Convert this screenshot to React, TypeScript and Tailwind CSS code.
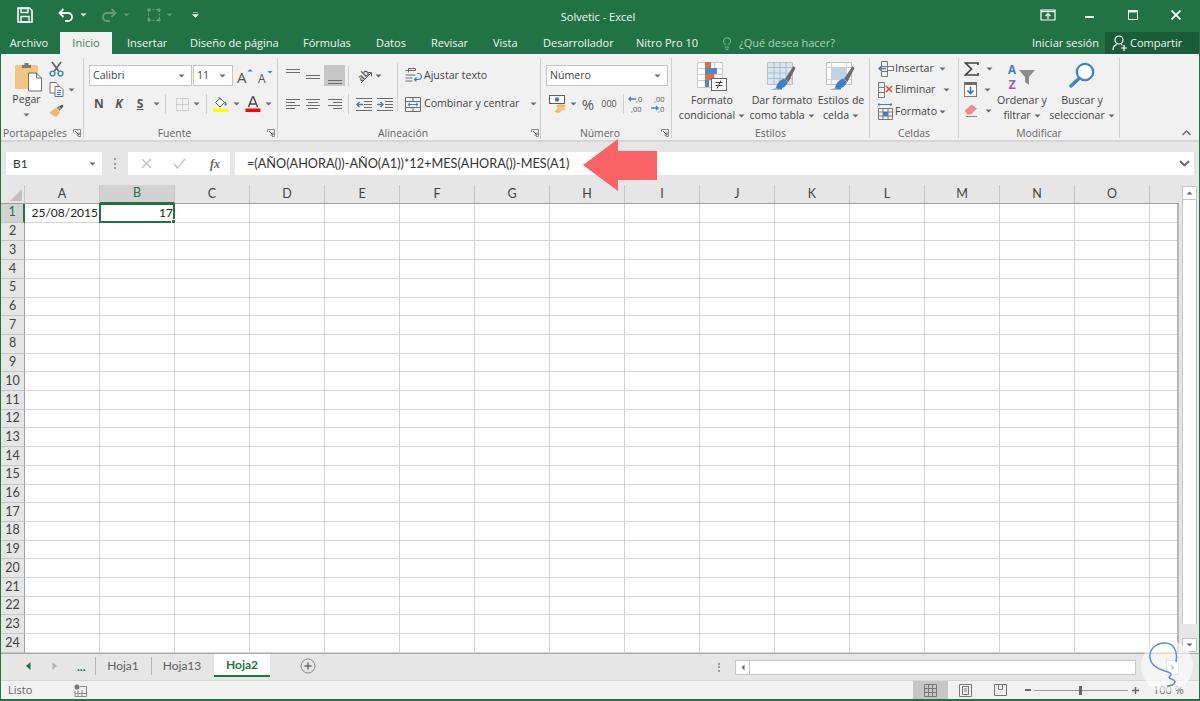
import { Lightbulb } from "lucide-react";

const columns = ["A", "B", "C", "D", "E", "F", "G", "H", "I", "J", "K", "L", "M", "N", "O"];
const rows = Array.from({ length: 24 }, (_, i) => i + 1);

const Caret = () => (
  <svg width="7" height="4" viewBox="0 0 7 4" className="shrink-0">
    <path d="M0.5 0.5h6L3.5 3.5z" fill="#6a6a6a" />
  </svg>
);

const WhiteCaret = () => (
  <svg width="7" height="4" viewBox="0 0 7 4" className="shrink-0">
    <path d="M0.5 0.5h6L3.5 3.5z" fill="#ffffff" />
  </svg>
);

const Launcher = () => (
  <svg width="8" height="8" viewBox="0 0 8 8" className="shrink-0">
    <path d="M0.5 3V0.5H7.5V7.5H5" fill="none" stroke="#8a8a8a" />
    <path d="M2 2l4 4M6 3.5V6H3.5" fill="none" stroke="#5e5e5e" />
  </svg>
);

const Sep = ({ className = "" }: { className?: string }) => <div className={`w-px h-[20px] bg-[#cfcfcf] shrink-0 ${className}`} />;

// lines of the alignment buttons
const Lines = ({ items, y = 0 }: { items: [number, number, number][]; y?: number }) => (
  <svg width="16" height="14" viewBox="0 0 16 14" style={{ transform: `translateY(${y}px)` }}>
    {items.map(([a, b, c], i) => (
      <path key={i} d={`M${a} ${c + 0.5}H${b}`} stroke="#6d6d6d" />
    ))}
  </svg>
);

const PasteIcon = () => (
  <svg width="27" height="30" viewBox="0 0 27 30">
    <rect x="0" y="3" width="23" height="24" rx="1.5" fill="#f0c781" />
    <path d="M7 3h2.5V1h4v2H16v3H7z" fill="#7a7a7a" />
    <path d="M13.5 11h8l5 5v13h-13z" fill="#ffffff" stroke="#6e6e6e" />
    <path d="M21.5 11v5h5" fill="none" stroke="#6e6e6e" />
  </svg>
);

const ScissorsIcon = () => (
  <svg width="15" height="16" viewBox="0 0 15 16">
    <path d="M3 1l6.5 9M12 1L5.5 10" stroke="#5a5a5a" strokeWidth="1.6" fill="none" />
    <circle cx="3.5" cy="12.5" r="2.4" fill="none" stroke="#3f7fc4" strokeWidth="1.4" />
    <circle cx="11.5" cy="12.5" r="2.4" fill="none" stroke="#3f7fc4" strokeWidth="1.4" />
  </svg>
);

const CopyIcon = () => (
  <svg width="15" height="15" viewBox="0 0 15 15">
    <path d="M1 0.5h6l2 2V11H1z" fill="#fff" stroke="#6e6e6e" />
    <path d="M6 4.5h5l3 3v7H6z" fill="#fff" stroke="#6e6e6e" />
    <path d="M8 8.5h4M8 10.5h4M8 12.5h4" stroke="#3f7fc4" />
  </svg>
);

const BrushIcon = () => (
  <svg width="16" height="14" viewBox="0 0 16 14">
    <path d="M0.5 8.5L7 3.5l4 5-3.5 4.5C5 12.5 2 10.5 0.5 8.5z" fill="#eeb96e" />
    <path d="M7.5 3.5l2-1.5 2.5 3-1.5 2z" fill="#8a8a8a" />
    <path d="M10 2.5l3-2 1.5 1.5-2 3z" fill="#555555" />
  </svg>
);

const GrowA = ({ up }: { up: boolean }) => (
  <svg width="20" height="20" viewBox="0 0 20 20">
    <text x="2" y="17" fontFamily="Open Sans, sans-serif" fontSize={up ? 15 : 12} fill="#555555">
      A
    </text>
    <path d={up ? "M12.5 5.5L15 3l2.5 2.5z" : "M11.5 5h5L14 7.5z"} fill="#3f7fc4" />
  </svg>
);

const BordersIcon = () => (
  <svg width="13" height="13" viewBox="0 0 13 13">
    <path d="M0.5 0.5h12v12h-12zM6.5 0.5v12M0.5 6.5h12" fill="none" stroke="#b0b0b0" strokeDasharray="1 1" />
  </svg>
);

const FillIcon = () => (
  <svg width="16" height="16" viewBox="0 0 16 16">
    <path d="M2.5 6.5L7 2l4.5 4.5L7 11z" fill="#fff" stroke="#5e5e5e" />
    <path d="M5.5 1l2 3" stroke="#5e5e5e" />
    <path d="M12 5c1.5 2 2 3 1.5 4s-2 .5-2-.5 .5-2 .5-3.5z" fill="#3f7fc4" />
    <rect x="0" y="12.5" width="15" height="3.5" fill="#ffff00" />
  </svg>
);

const FontColorIcon = () => (
  <svg width="16" height="16" viewBox="0 0 16 16">
    <path d="M3.5 11L7.5 1h1l4 10M5 8h6" fill="none" stroke="#444444" strokeWidth="1.4" />
    <rect x="0.5" y="12.5" width="15" height="3.5" fill="#ff0000" />
  </svg>
);

const OrientationIcon = () => (
  <svg width="20" height="18" viewBox="0 0 20 18">
    <text x="3" y="13" transform="rotate(-45 7 10)" fontFamily="Open Sans, sans-serif" fontSize="10" fontWeight="600" fill="#555555">
      ab
    </text>
    <path d="M6 16L16 6M12.5 5.5H16.5V9.5" fill="none" stroke="#5e5e5e" />
  </svg>
);

const IndentIcon = ({ out }: { out: boolean }) => (
  <svg width="16" height="13" viewBox="0 0 16 13">
    <path d="M0 0.5h16M8 3.5h8M8 6.5h8M8 9.5h8M0 12.5h16" stroke="#6d6d6d" />
    <path d={out ? "M7 6.5H1M3.5 4L1 6.5 3.5 9" : "M0 6.5h6M3.5 4L6 6.5 3.5 9"} fill="none" stroke="#3f7fc4" strokeWidth="1.4" />
  </svg>
);

const WrapIcon = () => (
  <svg width="17" height="15" viewBox="0 0 17 15">
    <path d="M0.5 2.5h10v-2h-7v4M0.5 7h10M0.5 10h7M0.5 13h7" fill="none" stroke="#6d6d6d" />
    <path d="M10 11.5h3.5a2.5 2.5 0 0 0 0-6H12M11.5 9.5l-2 2 2 2" fill="none" stroke="#3f7fc4" strokeWidth="1.2" />
  </svg>
);

const MergeIcon = () => (
  <svg width="16" height="15" viewBox="0 0 16 15">
    <path d="M0.5 0.5h15v14h-15zM0.5 4.5h15M0.5 10.5h15M8 0.5v4M8 10.5v4" fill="none" stroke="#6d6d6d" />
    <path d="M3 7.5h10M5 5.8L3 7.5l2 1.7M11 5.8l2 1.7-2 1.7" fill="none" stroke="#3f7fc4" />
  </svg>
);

const CurrencyIcon = () => (
  <svg width="18" height="18" viewBox="0 0 18 18">
    <rect x="0.5" y="0.5" width="15" height="8" fill="#fff" stroke="#5e5e5e" />
    <circle cx="8" cy="4.5" r="2.2" fill="#3f7fc4" />
    <ellipse cx="12" cy="11" rx="4.5" ry="1.8" fill="#eeb96e" />
    <ellipse cx="12" cy="14" rx="4.5" ry="1.8" fill="#f0c781" />
    <ellipse cx="9" cy="16.2" rx="3" ry="1.5" fill="#eeb96e" />
  </svg>
);

const DecimalIcon = ({ more }: { more: boolean }) => (
  <svg width="18" height="20" viewBox="0 0 18 20" className="overflow-visible">
    <text x={more ? 8 : 5} y="8" fontFamily="Open Sans, sans-serif" fontSize="7.5" fill="#555555">
      {more ? ",0" : ",00"}
    </text>
    <text x={more ? 3 : 9} y="18" fontFamily="Open Sans, sans-serif" fontSize="7.5" fill="#555555">
      {more ? ",00" : ",0"}
    </text>
    <path d={more ? "M8 5H1M3 3L1 5l2 2" : "M2 14h7M7 12l2 2-2 2"} fill="none" stroke="#3f7fc4" strokeWidth="1.3" />
  </svg>
);

const CondFormatIcon = () => (
  <svg width="30" height="29" viewBox="0 0 30 29">
    <path d="M0.5 0.5h25v25h-25z" fill="#fff" stroke="#c9c9c9" />
    <path d="M8.5 0v26M17.5 0v26M0 6.5h26M0 12.5h26M0 18.5h26" stroke="#d0d0d0" />
    <rect x="8" y="0" width="6" height="6" fill="#dd6b45" />
    <rect x="8" y="6" width="12" height="6" fill="#4a8ac8" />
    <rect x="8" y="12" width="9" height="6" fill="#dd6b45" />
    <rect x="8" y="18" width="4" height="7" fill="#4a8ac8" />
    <rect x="14.5" y="16.5" width="15" height="12" fill="#fff" stroke="#666666" />
    <path d="M18.5 20.5h7M18.5 23.5h7M24 18.5l-4 8" stroke="#444444" fill="none" />
  </svg>
);

const TableStyleIcon = ({ cell }: { cell: boolean }) => (
  <svg width="30" height="28" viewBox="0 0 30 28">
    <path d="M0.5 0.5h25v22h-25z" fill={cell ? "#ffffff" : "#dbe5f1"} stroke="#c0c0c0" />
    {cell ? (
      <>
        <rect x="5" y="6" width="16" height="11" fill="#bcd3ea" />
        <path d="M5.5 0v23M20.5 0v23M0 5.5h26M0 17.5h26" stroke="#cfcfcf" />
      </>
    ) : (
      <path d="M7 0v23M13 0v23M19 0v23M0 5.5h26M0 11h26M0 16.5h26" stroke="#a9bdd3" />
    )}
    <path d="M18 17L26.5 4l2 2-7 14z" fill="#6a6a6a" />
    <path d="M9 26c1-5 4-8 8-9.5l4 3.5c-2 4-4 6-7 6z" fill="#3f7fc4" />
    <path d="M3 27.5h12v-2c-4 1-8 1-12 2z" fill="#3f7fc4" />
  </svg>
);

const InsertCellsIcon = () => (
  <svg width="16" height="16" viewBox="0 0 16 16">
    <path d="M3.5 0.5h6v15h-6zM3.5 5.5h6M3.5 10.5h6" fill="none" stroke="#7a7a7a" />
    <rect x="9.5" y="5.5" width="6" height="4" fill="#fff" stroke="#7a7a7a" />
    <path d="M8 7.5H1M3 5.5l-2 2 2 2" fill="none" stroke="#3f7fc4" strokeWidth="1.3" />
  </svg>
);

const DeleteCellsIcon = () => (
  <svg width="17" height="16" viewBox="0 0 17 16">
    <path d="M1.5 0.5h6v15h-6zM1.5 5.5h6M1.5 10.5h6" fill="none" stroke="#7a7a7a" />
    <path d="M9 4l6 6M15 4l-6 6" stroke="#e0533a" strokeWidth="1.6" />
  </svg>
);

const FormatCellsIcon = () => (
  <svg width="16" height="17" viewBox="0 0 16 17">
    <path d="M0 1.5h14M1 0v3M13 0v3" stroke="#3f7fc4" />
    <path d="M0.5 5.5h14v11h-14zM5 5.5v11M10 5.5v11M0.5 9h14M0.5 13h14" fill="none" stroke="#7a7a7a" />
    <rect x="5" y="9" width="5" height="4" fill="#3f7fc4" />
  </svg>
);

const SigmaIcon = () => (
  <svg width="15" height="14" viewBox="0 0 15 14">
    <path d="M14 3V1H1.5L7.5 7 1.5 13H14v-2" fill="none" stroke="#444444" strokeWidth="1.7" />
  </svg>
);

const FillDownIcon = () => (
  <svg width="13" height="15" viewBox="0 0 13 15">
    <rect x="0.5" y="0.5" width="12" height="14" fill="#fff" stroke="#7a7a7a" />
    <rect x="0" y="0" width="13" height="3" fill="#6d6d6d" />
    <path d="M6.5 4.5v7M3.5 8.5l3 3 3-3" fill="none" stroke="#2f75bd" strokeWidth="1.6" />
  </svg>
);

const EraserIcon = () => (
  <svg width="14" height="13" viewBox="0 0 14 13">
    <path d="M0.5 7L7.5 0.5l5.5 4-6 6H3.5z" fill="#ee8b90" />
    <path d="M2 12.5h11" stroke="#8a8a8a" />
  </svg>
);

const SortIcon = () => (
  <svg width="28" height="30" viewBox="0 0 28 30" className="overflow-visible">
    <text x="0" y="12" fontFamily="Open Sans, sans-serif" fontWeight="700" fontSize="11.5" fill="#3f7fc4">
      A
    </text>
    <text x="0.5" y="27" fontFamily="Open Sans, sans-serif" fontWeight="700" fontSize="12.5" fill="#9b5cc4">
      Z
    </text>
    <path d="M11 8h16l-6 7v8l-4-3v-5z" fill="#8c8c8c" />
  </svg>
);

const SearchIcon = () => (
  <svg width="26" height="26" viewBox="0 0 26 26">
    <circle cx="16" cy="10" r="8.2" fill="#ffffff" stroke="#3f84c8" strokeWidth="2.2" />
    <path d="M10 16.5L2 24" stroke="#3f84c8" strokeWidth="3.4" strokeLinecap="round" />
  </svg>
);

const Group = ({ width, label, launcher, labelClass = "", children }: { width: string; label?: string; launcher?: string; labelClass?: string; children: React.ReactNode }) => (
  <div className={`${width} h-[80px] border-r border-[#d0d0d0] flex flex-col shrink-0`}>
    <div className="flex-1 min-h-0">{children}</div>
    <div className={`h-[10px] leading-[10px] text-[10.4px] text-[#666666] relative text-center whitespace-nowrap ${labelClass}`}>
      {label}
      {launcher ? <span className={`absolute top-[1px] ${launcher}`}><Launcher /></span> : null}
    </div>
  </div>
);

const Combo = ({ width, text }: { width: string; text: string }) => (
  <div className={`${width} h-[21px] bg-white border border-[#c6c6c6] flex items-center justify-between pl-[3px] pr-[6px] text-[10.6px] text-[#444444]`}>
    <span>{text}</span>
    <Caret />
  </div>
);

const Slot = ({ width, children, className = "" }: { width: string; children?: React.ReactNode; className?: string }) => (
  <div className={`${width} h-full flex items-center justify-center shrink-0 ${className}`}>{children}</div>
);

const BigButton = ({ width, icon, top, bottom }: { width: string; icon: React.ReactNode; top: string; bottom: string }) => (
  <div className={`${width} shrink-0 flex flex-col items-center mt-[4px] text-[10.6px] leading-[15px] text-[#444444] whitespace-nowrap`}>
    <div className="h-[31px] flex items-start">{icon}</div>
    <div>{top}</div>
    <div className="flex items-center gap-[3px]">
      {bottom}
      <Caret />
    </div>
  </div>
);

const CellRow = ({ icon, label, gap }: { icon: React.ReactNode; label: string; gap: string }) => (
  <div className="h-[21.5px] flex items-center text-[10.6px] text-[#444444]">
    <Slot width="w-[17px]">{icon}</Slot>
    <span className="ml-[1px] w-[37px] whitespace-nowrap">{label}</span>
    <span className={gap}>
      <Caret />
    </span>
  </div>
);

export default function App() {
  return (
    <div className="relative w-[1200px] h-[701px] overflow-hidden bg-[#217346] px-px pb-[2px] font-['Open_Sans',sans-serif]">
      <div className="h-full flex flex-col">
        {/* title bar */}
        <div className="h-[32px] flex items-center shrink-0 text-white -ml-px">
          <svg width="16" height="16" viewBox="0 0 16 16" className="ml-[17px] -mt-[3px]">
            <path d="M1 1h11.5L15 3.5V15H1z" fill="none" stroke="#fff" strokeWidth="1.6" />
            <path d="M4 1.5h7v4H4zM4 9.5h8V15H4z" fill="none" stroke="#fff" strokeWidth="1.4" />
          </svg>
          <svg width="16" height="14" viewBox="0 0 16 14" className="ml-[25px] -mt-[3px]">
            <path d="M5.5 1L1.5 5l4 4M1.5 5H10a4 4 0 0 1 0 8H7" fill="none" stroke="#fff" strokeWidth="1.8" />
          </svg>
          <div className="ml-[6px] -mt-[3px]"><WhiteCaret /></div>
          <svg width="16" height="14" viewBox="0 0 16 14" className="ml-[14px] -mt-[3px] opacity-30">
            <path d="M10.5 1l4 4-4 4M14.5 5H6a4 4 0 0 0 0 8h3" fill="none" stroke="#fff" strokeWidth="1.8" />
          </svg>
          <div className="ml-[6px] -mt-[3px] opacity-30"><WhiteCaret /></div>
          <svg width="16" height="16" viewBox="0 0 16 16" className="ml-[16px] -mt-[3px] opacity-30">
            <path d="M3 2.5h10M3 13.5h10M2.5 3v10M13.5 3v10" fill="none" stroke="#fff" strokeDasharray="2 1.5" />
            <circle cx="3" cy="3" r="1.8" fill="#fff" />
            <circle cx="13" cy="3" r="1.8" fill="#fff" />
            <circle cx="3" cy="13" r="1.8" fill="#fff" />
            <circle cx="13" cy="13" r="1.8" fill="#fff" />
          </svg>
          <div className="ml-[4px] -mt-[3px] opacity-30"><WhiteCaret /></div>
          <svg width="7" height="6" viewBox="0 0 7 6" className="ml-[19px] -mt-[3px]">
            <path d="M1 0.5h5M0.5 2.5h6L3.5 5.5z" fill="#fff" stroke="#fff" strokeWidth="0.5" />
          </svg>
          <div className="w-[796px] ml-[1px] text-center text-[11px] text-[#f4f8f5] mt-[2px]">Solvetic - Excel</div>
          <svg width="16" height="12" viewBox="0 0 16 12" className="ml-[44px] -mt-[3px]">
            <path d="M1 1h14v10H1z" fill="none" stroke="#fff" strokeWidth="1.2" />
            <path d="M1 2.5h14" stroke="#fff" strokeWidth="1.4" />
            <path d="M8 10V5M5.5 7L8 4.5 10.5 7" fill="none" stroke="#fff" strokeWidth="1.2" />
          </svg>
          <div className="w-[9px] h-[2px] bg-white ml-[29px] mt-[2px]" />
          <svg width="10" height="10" viewBox="0 0 10 10" className="ml-[34px] -mt-[3px]">
            <path d="M0.5 0.5h9v9h-9z" fill="none" stroke="#fff" />
            <path d="M0 1.5h10" stroke="#fff" strokeWidth="2" />
          </svg>
          <svg width="10" height="10" viewBox="0 0 10 10" className="ml-[33px] -mt-[3px]">
            <path d="M0.5 0.5l9 9M9.5 0.5l-9 9" stroke="#fff" strokeWidth="1.8" />
          </svg>
        </div>

        {/* tab row */}
        <div className="h-[22px] flex items-stretch shrink-0 text-[11px] text-[#f1f6f3] leading-[22px] whitespace-nowrap -ml-px">
          <div className="ml-[9px] w-[40px] text-center">Archivo</div>
          <div className="ml-[11px] w-[52px] text-center bg-[#f1f1f1] text-[#3c7d5a]">Inicio</div>
          <div className="ml-[15px] w-[36px] text-center">Insertar</div>
          <div className="ml-[27px] w-[85px] text-center">Diseño de página</div>
          <div className="ml-[28px] w-[46px] text-center">Fórmulas</div>
          <div className="ml-[27px] w-[28px] text-center">Datos</div>
          <div className="ml-[27px] w-[35px] text-center">Revisar</div>
          <div className="ml-[27px] w-[23px] text-center">Vista</div>
          <div className="ml-[27px] w-[66px] text-center">Desarrollador</div>
          <div className="ml-[27px] w-[59px] text-center">Nitro Pro 10</div>
          <div className="ml-[25px] w-[14px] flex items-center justify-center text-[#a9d3ba]">
            <Lightbulb size={15} strokeWidth={1.2} />
          </div>
          <div className="ml-[5px] w-[90px] text-center text-[#a9d3ba]">¿Qué desea hacer?</div>
          <div className="ml-auto w-[64px] text-center">Iniciar sesión</div>
          <div className="ml-[9px] w-[94px] bg-[#1a5c38] flex items-center">
            <svg width="15" height="16" viewBox="0 0 15 16" className="ml-[7px]">
              <circle cx="7" cy="5" r="4" fill="none" stroke="#fff" strokeWidth="1.2" />
              <path d="M1 15c0-3 2-5 4-5.5M9 9.5c.5.2 1 .4 1.5.8M9 13h6M12 10v6" fill="none" stroke="#fff" strokeWidth="1.2" />
            </svg>
            <span className="ml-[3px]">Compartir</span>
          </div>
        </div>

        {/* ribbon */}
        <div className="h-[86px] shrink-0 bg-[#f1f1f1] flex pt-[4px] text-[#444444]">
          <Group width="w-[83px]" label="Portapapeles" launcher="left-[72px]" labelClass="pr-[14px]">
            <div className="flex h-full">
              <div className="w-[51px] flex flex-col items-center text-[10.6px] text-[#444444]">
                <div className="mt-[4px] h-[30px] pl-[3px]"><PasteIcon /></div>
                <div className="leading-[15px]">Pegar</div>
                <div className="mt-[6px]"><Caret /></div>
              </div>
              <div className="flex flex-col -ml-[3px]">
                <div className="h-[21px] flex items-center"><ScissorsIcon /></div>
                <div className="h-[21px] flex items-center gap-[4px]">
                  <CopyIcon />
                  <Caret />
                </div>
                <div className="h-[21px] flex items-center"><BrushIcon /></div>
              </div>
            </div>
          </Group>

          <Group width="w-[194px]" label="Fuente" launcher="left-[183px]" labelClass="pr-[12px]">
            <div className="flex pl-[5px] mt-[7px] items-center h-[21px]">
              <Combo width="w-[103px]" text="Calibri" />
              <Combo width="w-[40px] ml-[1px]" text="11" />
              <Slot width="w-[20px] ml-[2px]"><GrowA up /></Slot>
              <Slot width="w-[20px] ml-[1px]"><GrowA up={false} /></Slot>
            </div>
            <div className="flex pl-[5px] mt-[8px] items-center h-[20px] text-[12px] font-bold text-[#555555]">
              <Slot width="w-[20px]">N</Slot>
              <Slot width="w-[20px]" className="italic">K</Slot>
              <Slot width="w-[22px]" className="underline">S</Slot>
              <Slot width="w-[10px]"><Caret /></Slot>
              <Sep className="ml-[4px]" />
              <Slot width="w-[22px] ml-[5px]"><BordersIcon /></Slot>
              <Slot width="w-[6px]"><Caret /></Slot>
              <Sep className="ml-[7px]" />
              <Slot width="w-[20px] ml-[4px]"><FillIcon /></Slot>
              <Slot width="w-[10px]"><Caret /></Slot>
              <Slot width="w-[20px] ml-[2px]"><FontColorIcon /></Slot>
              <Slot width="w-[10px]"><Caret /></Slot>
            </div>
          </Group>

          <Group width="w-[263px]" label="Alineación" launcher="left-[253px]" labelClass="pr-[12px]">
            <div className="flex h-full">
              <div className="w-[119px] shrink-0">
                <div className="flex pl-[5px] mt-[7px] items-center h-[21px]">
                  <Slot width="w-[20px]"><Lines items={[[1, 15, 3], [1, 15, 6]]} y={-3} /></Slot>
                  <Slot width="w-[20px]"><Lines items={[[1, 15, 6], [1, 15, 9]]} /></Slot>
                  <Slot width="w-[21px] ml-[1px] bg-[#c6c6c6]"><Lines items={[[1, 15, 9], [1, 15, 12]]} y={2} /></Slot>
                  <Sep className="ml-[3px]" />
                  <Slot width="w-[20px] ml-[6px]"><OrientationIcon /></Slot>
                  <Slot width="w-[6px]"><Caret /></Slot>
                </div>
                <div className="flex pl-[5px] mt-[8px] items-center h-[20px]">
                  <Slot width="w-[20px]"><Lines items={[[1, 15, 2], [1, 10, 5], [1, 15, 8], [1, 10, 11]]} /></Slot>
                  <Slot width="w-[20px]"><Lines items={[[1, 15, 2], [3, 13, 5], [1, 15, 8], [3, 13, 11]]} /></Slot>
                  <Slot width="w-[21px] ml-[1px]"><Lines items={[[1, 15, 2], [6, 15, 5], [1, 15, 8], [6, 15, 11]]} /></Slot>
                  <Sep className="ml-[3px]" />
                  <Slot width="w-[20px] ml-[5px]"><IndentIcon out /></Slot>
                  <Slot width="w-[20px] ml-[1px]"><IndentIcon out={false} /></Slot>
                </div>
              </div>
              <div className="w-px h-[48px] mt-[5px] bg-[#d0d0d0] shrink-0" />
              <div className="pl-[7px] text-[10.6px] text-[#444444] whitespace-nowrap">
                <div className="flex items-center gap-[2px] mt-[7px] h-[21px]">
                  <WrapIcon />
                  <span>Ajustar texto</span>
                </div>
                <div className="flex items-center gap-[2px] mt-[8px] h-[20px]">
                  <MergeIcon />
                  <span className="ml-[1px] w-[96px]">Combinar y centrar</span>
                  <span className="ml-[8px]"><Caret /></span>
                </div>
              </div>
            </div>
          </Group>

          <Group width="w-[131px]" label="Número" launcher="left-[120px]" labelClass="pr-[12px]">
            <div className="flex pl-[5px] mt-[7px] h-[21px]">
              <Combo width="w-[122px]" text="Número" />
            </div>
            <div className="flex pl-[5px] mt-[8px] items-center h-[20px]">
              <Slot width="w-[24px]"><CurrencyIcon /></Slot>
              <Slot width="w-[6px]"><Caret /></Slot>
              <Slot width="w-[20px] ml-[2px]" className="text-[15px] text-[#555555]">%</Slot>
              <Slot width="w-[22px]" className="text-[9px] text-[#555555]">000</Slot>
              <Sep className="ml-[3px]" />
              <Slot width="w-[22px] ml-[2px]"><DecimalIcon more /></Slot>
              <Slot width="w-[20px]"><DecimalIcon more={false} /></Slot>
            </div>
          </Group>

          <Group width="w-[198px]" label="Estilos">
            <div className="flex h-full">
              <BigButton width="w-[80px]" icon={<CondFormatIcon />} top="Formato" bottom="condicional" />
              <BigButton width="w-[60px]" icon={<TableStyleIcon cell={false} />} top="Dar formato" bottom="como tabla" />
              <BigButton width="w-[58px]" icon={<TableStyleIcon cell />} top="Estilos de" bottom="celda" />
            </div>
          </Group>

          <Group width="w-[89px]" label="Celdas">
            <div className="pl-[7px]">
              <CellRow icon={<InsertCellsIcon />} label="Insertar" gap="ml-[7px]" />
              <CellRow icon={<DeleteCellsIcon />} label="Eliminar" gap="ml-[11px]" />
              <CellRow icon={<FormatCellsIcon />} label="Formato" gap="ml-[7px]" />
            </div>
          </Group>

          <Group width="w-[161px]" label="Modificar">
            <div className="flex h-full">
              <div className="w-[37px] shrink-0 pl-[5px]">
                <div className="h-[21px] flex items-center gap-[7px]"><SigmaIcon /><Caret /></div>
                <div className="h-[21px] flex items-center gap-[7px]"><FillDownIcon /><Caret /></div>
                <div className="h-[21px] flex items-center gap-[7px]"><EraserIcon /><Caret /></div>
              </div>
              <BigButton width="w-[52px]" icon={<SortIcon />} top="Ordenar y" bottom="filtrar" />
              <BigButton width="w-[68px]" icon={<SearchIcon />} top="Buscar y" bottom="seleccionar" />
            </div>
          </Group>

          <div className="flex-1 flex justify-end items-end pr-[8px] pb-[2px] h-[80px]">
            <svg width="9" height="6" viewBox="0 0 9 6">
              <path d="M0.5 5L4.5 1l4 4" fill="none" stroke="#666666" strokeWidth="1.3" />
            </svg>
          </div>
        </div>

        {/* formula bar */}
        <div className="h-[45px] shrink-0 bg-[#e6e6e6] border-t-2 border-[#d6d6d6] pt-[10px] flex items-start">
          <div className="ml-[5px] w-[96px] h-[23px] bg-white flex items-center justify-between pl-[7px] pr-[6px] text-[12px] font-['Lato',sans-serif] text-[#333333]">
            <span>B1</span>
            <Caret />
          </div>
          <div className="ml-[12px] w-[3px] h-[11px] mt-[6px] border-l-2 border-dotted border-[#9a9a9a]" />
          <div className="ml-[11px] w-[102px] h-[23px] bg-white flex items-center text-[#bdbdbd]">
            <svg width="11" height="11" viewBox="0 0 11 11" className="ml-[13px]">
              <path d="M1 1l9 9M10 1l-9 9" stroke="#c4c4c4" strokeWidth="1.5" />
            </svg>
            <svg width="13" height="11" viewBox="0 0 13 11" className="ml-[21px]">
              <path d="M1 6l3.5 4L12 1" fill="none" stroke="#c4c4c4" strokeWidth="1.5" />
            </svg>
            <span className="ml-[24px] font-['Liberation_Serif',serif] italic font-bold text-[12px] text-[#666666]">fx</span>
          </div>
          <div className="ml-[5px] w-[959px] h-[23px] bg-white flex items-center justify-between pl-[12px] pr-[4px] font-['Lato',sans-serif] text-[12.7px] text-[#333333]">
            <span>=(AÑO(AHORA())-AÑO(A1))*12+MES(AHORA())-MES(A1)</span>
            <svg width="11" height="7" viewBox="0 0 11 7">
              <path d="M1 1l4.5 4.5L10 1" fill="none" stroke="#666666" strokeWidth="1.8" />
            </svg>
          </div>
        </div>

        {/* sheet */}
        <div className="h-[468px] shrink-0 flex bg-[#e6e6e6] font-['Lato',sans-serif]">
          <div className="w-[1178px] shrink-0 flex flex-col">
            <div className="h-[19px] shrink-0 flex text-[12.5px] text-[#444444] border-b border-[#9f9f9f]">
              <div className="w-[24px] shrink-0 flex items-end justify-end border-r border-[#c6c6c6] pr-[2px] pb-[2px]">
                <svg width="12" height="12" viewBox="0 0 12 12">
                  <path d="M12 0v12H0z" fill="#c0c0c0" />
                </svg>
              </div>
              {columns.map((c) => (
                <div
                  key={c}
                  className={
                    c === "B"
                      ? "w-[75px] shrink-0 flex items-center justify-center bg-[#d2d2d2] text-[#217346] border-r border-[#c6c6c6] border-b-2 border-b-[#217346] h-[19px]"
                      : "w-[75px] shrink-0 flex items-center justify-center border-r border-[#c6c6c6]"
                  }
                >
                  {c}
                </div>
              ))}
              <div className="flex-1" />
            </div>
            <div className="flex-1 flex flex-col bg-white min-h-0 border-r-2 border-[#b5b5b5]">
              {rows.map((r) => (
                <div key={r} className="flex-1 flex min-h-0">
                  <div
                    className={
                      r === 1
                        ? "w-[24px] shrink-0 bg-[#d2d2d2] text-[#217346] border-r-2 border-[#217346] border-b border-b-[#c6c6c6] flex items-center justify-center text-[12.5px]"
                        : "w-[24px] shrink-0 bg-[#e6e6e6] text-[#444444] border-r border-[#9f9f9f] border-b border-b-[#c6c6c6] flex items-center justify-center text-[12.5px]"
                    }
                  >
                    {r}
                  </div>
                  {columns.map((c) => (
                    <div key={c} className="relative w-[75px] shrink-0 border-r border-b border-[#d4d4d4] flex items-center justify-end pr-[1px] pt-px text-[12px] text-[#222222]">
                      {r === 1 && c === "A" ? "25/08/2015" : null}
                      {r === 1 && c === "B" ? "17" : null}
                      {r === 1 && c === "B" ? (
                        <>
                          <div className="absolute -left-px -top-px -right-px -bottom-px border-2 border-[#217346]" />
                          <div className="absolute -right-[2px] -bottom-[2px] w-[5px] h-[5px] bg-[#217346] border border-white" />
                        </>
                      ) : null}
                    </div>
                  ))}
                  <div className="flex-1 border-b border-[#d4d4d4]" />
                </div>
              ))}
            </div>
          </div>
          {/* vertical scrollbar */}
          <div className="flex-1 flex flex-col items-center pt-[1px] pb-[1px]">
            <div className="w-[15px] h-[14px] bg-white border border-[#c6c6c6] flex items-center justify-center">
              <svg width="7" height="4" viewBox="0 0 7 4"><path d="M0.5 3.5h6L3.5 0.5z" fill="#6a6a6a" /></svg>
            </div>
            <div className="w-[15px] h-[424px] bg-white border-x border-[#c6c6c6]" />
            <div className="flex-1" />
            <div className="w-[15px] h-[14px] bg-white border border-[#c6c6c6] flex items-center justify-center">
              <Caret />
            </div>
          </div>
        </div>

        {/* sheet tabs */}
        <div className="h-[27px] shrink-0 bg-[#e6e6e6] border-t border-[#a8a8a8] flex text-[12px] text-[#5f5f5f] font-['Lato',sans-serif]">
          <div className="flex items-center h-[23px]">
            <svg width="5" height="8" viewBox="0 0 5 8" className="ml-[25px]"><path d="M4.5 0v8L0 4z" fill="#217346" /></svg>
            <svg width="5" height="8" viewBox="0 0 5 8" className="ml-[21px]"><path d="M0.5 0v8L5 4z" fill="#b5b5b5" /></svg>
            <span className="ml-[20px] w-[12px] font-bold text-[#217346] leading-none mt-[2px]">...</span>
          </div>
          <div className="w-px h-[18px] bg-[#b5b5b5] ml-[6px] mt-[3px]" />
          <div className="ml-[11px] w-[32px] h-[23px] flex items-center justify-center">Hoja1</div>
          <div className="w-px h-[18px] bg-[#b5b5b5] ml-[12px] mt-[3px]" />
          <div className="ml-[11px] w-[38px] h-[23px] flex items-center justify-center">Hoja13</div>
          <div className="ml-[13px] w-[56px] h-[23px] bg-white border-b-2 border-[#217346] flex items-center justify-center font-bold text-[#217346]">Hoja2</div>
          <svg width="16" height="16" viewBox="0 0 16 16" className="ml-[30px] mt-[4px]">
            <circle cx="8" cy="8" r="7" fill="none" stroke="#8a8a8a" />
            <path d="M8 4.5v7M4.5 8h7" stroke="#6a6a6a" strokeWidth="1.4" />
          </svg>
          <div className="ml-[402px] mt-[9px] w-[3px] h-[9px] border-l-2 border-dotted border-[#9a9a9a]" />
          <div className="ml-[14px] mt-[6px] w-[15px] h-[15px] bg-white border border-[#c6c6c6] flex items-center justify-center">
            <svg width="4" height="7" viewBox="0 0 4 7"><path d="M3.5 0.5v6L0.5 3.5z" fill="#6a6a6a" /></svg>
          </div>
          <div className="mt-[6px] w-[386px] h-[15px] bg-white border-y border-r border-[#c6c6c6]" />
          <div className="ml-[30px] mt-[6px] w-[13px] h-[15px] bg-white border border-[#c6c6c6] flex items-center justify-center">
            <svg width="4" height="7" viewBox="0 0 4 7"><path d="M0.5 0.5v6L3.5 3.5z" fill="#6a6a6a" /></svg>
          </div>
        </div>

        {/* status bar */}
        <div className="flex-1 bg-[#f1f1f1] border-t border-[#d6d6d6] flex items-center text-[11px] text-[#666666] min-h-0">
          <span className="ml-[7px] w-[40px]">Listo</span>
          <svg width="13" height="13" viewBox="0 0 13 13" className="ml-[26px]">
            <circle cx="3" cy="3" r="2.5" fill="#777777" />
            <path d="M6 2.5h6.5v10H1V7M1 9.5h11.5M4 6v6.5M8 6v6.5" fill="none" stroke="#8a8a8a" />
          </svg>
          <div className="ml-[826px] w-[35px] h-full bg-[#c6c6c6] flex items-center justify-center">
            <svg width="13" height="13" viewBox="0 0 13 13">
              <path d="M0.5 0.5h12v12h-12zM4.500 0.500v12M8.500 0.500v12M0.500 4.500h12M0.500 8.500h12" fill="none" stroke="#777777" />
            </svg>
          </div>
          <svg width="13" height="13" viewBox="0 0 13 13" className="ml-[11px]">
            <path d="M0.5 0.5h12v12h-12z" fill="none" stroke="#777777" />
            <path d="M3.5 2.5h6v8h-6zM5 5h3M5 7h3" fill="none" stroke="#777777" />
          </svg>
          <svg width="13" height="12" viewBox="0 0 13 12" className="ml-[22px]">
            <path d="M0.5 0.5h12v11h-12zM4.5 0.5v5h4v-5" fill="none" stroke="#777777" />
          </svg>
          <div className="ml-[18px] w-[6px] h-[2px] bg-[#666666]" />
          <div className="ml-[3px] w-[94px] h-px bg-[#9a9a9a] relative">
            <div className="absolute left-[45px] -top-[4px] w-[3px] h-[9px] bg-[#666666]" />
          </div>
          <svg width="7" height="7" viewBox="0 0 7 7" className="ml-[4px]">
            <path d="M3.5 0v7M0 3.5h7" stroke="#666666" strokeWidth="1.5" />
          </svg>
          <span className="ml-[14px] whitespace-nowrap">100 %</span>
        </div>
      </div>

      {/* annotation arrow */}
      <svg width="76" height="54" viewBox="0 0 76 54" className="absolute left-[582px] top-[138px]">
        <path d="M1 27L36 1v12h39v29H36v11z" fill="#fb6467" />
      </svg>

      {/* watermark */}
      <div className="absolute left-[1141px] top-[640px] w-[52px] h-[52px] rounded-full bg-white/60">
        <svg width="54" height="56" viewBox="0 0 54 56" className="absolute -left-px -top-[2px]">
          <path
            d="M36 24C38 14 34 5 25 5C14 5 9 13 10 20C11 28 18 31 25 33C29 34 33 36 30 38C26 41 36 41 35 44C34 47 30 48 27 48"
            fill="none"
            stroke="#5c8fc8"
            strokeWidth="1.5"
          />
        </svg>
      </div>
    </div>
  );
}
